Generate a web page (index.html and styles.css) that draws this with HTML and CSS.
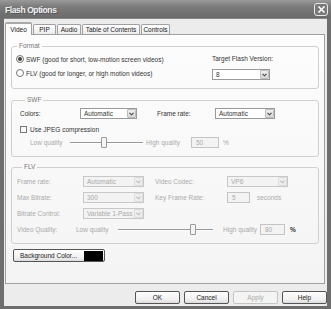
FILE: index.html
```html
<!DOCTYPE html>
<html lang="en">
<head>
  <meta charset="UTF-8" />
  <title>Flash Options</title>
  <link rel="stylesheet" href="styles.css">
</head>
<body>
  <div class="window">
    <div class="titlebar">
      <span class="title">Flash Options</span>
      <span class="close">
        <svg width="9" height="9" viewBox="0 0 9 9"><path d="M1.5 1.5 L7.5 7.5 M7.5 1.5 L1.5 7.5" stroke="#fff" stroke-width="1.6" fill="none"/></svg>
      </span>
    </div>

    <div class="client">
      <div class="tabs">
        <span class="tab active t-video">Video</span>
        <span class="tab t-pip">PIP</span>
        <span class="tab t-audio">Audio</span>
        <span class="tab t-toc">Table of Contents</span>
        <span class="tab t-controls">Controls</span>
      </div>

      <div class="panel">
        <!-- format -->
        <fieldset class="group g-format">
          <legend>Format</legend>
          <div class="format-body">
            <div class="radios">
              <div class="radio-row"><span class="radio on"></span>SWF (good for short, low-motion screen videos)</div>
              <div class="radio-row"><span class="radio"></span>FLV (good for longer, or high motion videos)</div>
            </div>
            <div class="target">
              <span class="row-text">Target Flash Version:</span>
              <div class="combo w-target"><span>8</span><i class="drop"><svg width="5" height="4" viewBox="0 0 5 4"><path d="M0.5 0.8 L2.5 2.8 L4.5 0.8" stroke="#444" stroke-width="1.1" fill="none"/></svg></i></div>
            </div>
          </div>
        </fieldset>

        <!-- swf -->
        <fieldset class="group g-swf">
          <legend>SWF</legend>
          <div class="row">
            <span class="lbl w-colors">Colors:</span>
            <div class="combo w-c1"><span>Automatic</span><i class="drop"><svg width="5" height="4" viewBox="0 0 5 4"><path d="M0.5 0.8 L2.5 2.8 L4.5 0.8" stroke="#444" stroke-width="1.1" fill="none"/></svg></i></div>
            <span class="lbl w-frame">Frame rate:</span>
            <div class="combo w-c2"><span>Automatic</span><i class="drop"><svg width="5" height="4" viewBox="0 0 5 4"><path d="M0.5 0.8 L2.5 2.8 L4.5 0.8" stroke="#444" stroke-width="1.1" fill="none"/></svg></i></div>
          </div>
          <div class="row">
            <span class="check"></span>
            <span>Use JPEG compression</span>
          </div>
          <div class="row indent off">
            <span class="lbl w-low">Low quality</span>
            <div class="slider w-s1"><span class="track"></span><span class="thumb th-s1"></span></div>
            <span class="lbl w-high">High quality</span>
            <div class="field w-f1">50</div>
            <span class="pct">%</span>
          </div>
        </fieldset>

        <!-- flv -->
        <fieldset class="group g-flv off">
          <legend>FLV</legend>
          <div class="row">
            <span class="lbl w-flv">Frame rate:</span>
            <div class="combo dis w-c3"><span>Automatic</span><i class="drop"><svg width="5" height="4" viewBox="0 0 5 4"><path d="M0.5 0.8 L2.5 2.8 L4.5 0.8" stroke="#bbb" stroke-width="1.1" fill="none"/></svg></i></div>
            <span class="lbl w-flv2">Video Codec:</span>
            <div class="combo dis w-c3"><span>VP6</span><i class="drop"><svg width="5" height="4" viewBox="0 0 5 4"><path d="M0.5 0.8 L2.5 2.8 L4.5 0.8" stroke="#bbb" stroke-width="1.1" fill="none"/></svg></i></div>
          </div>
          <div class="row">
            <span class="lbl w-flv">Max Bitrate:</span>
            <div class="combo dis w-c3"><span>300</span><i class="drop"><svg width="5" height="4" viewBox="0 0 5 4"><path d="M0.5 0.8 L2.5 2.8 L4.5 0.8" stroke="#bbb" stroke-width="1.1" fill="none"/></svg></i></div>
            <span class="lbl w-flv2">Key Frame Rate:</span>
            <div class="field w-f2">5</div>
            <span class="secs">seconds</span>
          </div>
          <div class="row">
            <span class="lbl w-flv">Bitrate Control:</span>
            <div class="combo dis w-c3"><span>Variable 1-Pass</span><i class="drop"><svg width="5" height="4" viewBox="0 0 5 4"><path d="M0.5 0.8 L2.5 2.8 L4.5 0.8" stroke="#bbb" stroke-width="1.1" fill="none"/></svg></i></div>
          </div>
          <div class="row">
            <span class="lbl w-vq">Video Quality:</span>
            <span class="lbl w-low2">Low quality</span>
            <div class="slider w-s2"><span class="track"></span><span class="thumb th-s2"></span></div>
            <span class="lbl w-high2">High quality</span>
            <div class="field w-f3">80</div>
            <span class="pct dark">%</span>
          </div>
        </fieldset>

        <div class="btn bg-btn">Background Color... <span class="swatch"></span></div>
      </div>

      <div class="buttons">
        <div class="btn">OK</div>
        <div class="btn">Cancel</div>
        <div class="btn dis">Apply</div>
        <div class="btn">Help</div>
      </div>
    </div>
  </div>
</body>
</html>
```

FILE: styles.css
```css
* {
  box-sizing: border-box;
}

body {
  margin: 0;
  background: #fff;
}

.window {
  width: 331px;
  height: 309px;
  background: #6e6e6e;
  display: flex;
  flex-direction: column;
  font-family: "Liberation Sans", Arial, sans-serif;
  font-size: 6.5px;
  color: #333;
}

.titlebar {
  height: 18px;
  background: linear-gradient(#9a9a9a, #7c7c7c 35%, #727272 70%, #6a6a6a);
  display: flex;
  align-items: center;
  justify-content: space-between;
  padding: 1px 3px 0 5px;
}

.title {
  color: #f2f2f2;
  font-size: 8.5px;
  font-weight: bold;
  letter-spacing: -0.4px;
  text-shadow: 1px 1px 0 #555;
}

.close {
  width: 14px;
  height: 13px;
  border: 1px solid #e8e8e8;
  border-radius: 3px;
  background: #7a7a7a;
  display: flex;
  align-items: center;
  justify-content: center;
}

.client {
  flex: 1;
  margin: 0 4px 3px 4px;
  background: #ececec;
  display: flex;
  flex-direction: column;
  border-top: 1px solid #888;
}

/* tabs */
.tabs {
  display: flex;
  align-items: flex-end;
  height: 15px;
  padding-left: 1px;
  position: relative;
  z-index: 1;
}

.tab {
  height: 10px;
  border: 1px solid #a0a0a0;
  border-bottom: none;
  border-radius: 2px 2px 0 0;
  background: linear-gradient(#fff, #ececec);
  display: flex;
  align-items: center;
  justify-content: center;
  color: #222;
  margin-right: 1px;
}

.tab.active {
  height: 13px;
  margin-bottom: -1px;
  background: #fcfcfc;
  border-top: 2px solid #a8a8a8;
  padding-bottom: 1px;
}

.t-video { width: 27px; }
.t-pip { width: 23px; }
.t-audio { width: 24px; }
.t-toc { width: 58px; }
.t-controls { width: 29px; }

.panel {
  width: 320px;
  height: 250px;
  margin-left: 1px;
  border: 1px solid #a0a0a0;
  background: linear-gradient(#fdfdfd, #f4f4f4);
  padding: 7px 5px 0 5px;
  display: flex;
  flex-direction: column;
}

/* group boxes */
.group {
  margin: 0;
  border: 1px solid #d0d0d0;
  border-radius: 3px;
  padding: 4px 0 8px 0;
  min-width: 0;
}

.group legend {
  margin-left: 5px;
  padding: 0 2px;
  line-height: 8px;
  color: #777;
}

.g-swf {
  margin-top: 7px;
  padding-left: 8px;
}

.g-flv {
  margin-top: 6px;
  padding: 5px 0 8px 5px;
}

.format-body {
  display: flex;
}

.radios {
  width: 200px;
  padding-left: 4px;
  display: flex;
  flex-direction: column;
  gap: 4px;
}

.radio-row {
  height: 10px;
  display: flex;
  align-items: center;
  gap: 2px;
}

.radio {
  width: 8px;
  height: 8px;
  border: 1px solid #777;
  border-radius: 50%;
  background: #fafafa;
  display: flex;
  align-items: center;
  justify-content: center;
}

.radio.on::after {
  content: "";
  width: 4px;
  height: 4px;
  border-radius: 50%;
  background: #444;
}

.target {
  display: flex;
  flex-direction: column;
  gap: 5px;
}

.row-text {
  height: 10px;
  line-height: 10px;
}

.row {
  height: 11px;
  display: flex;
  align-items: center;
}

.g-swf .row + .row {
  margin-top: 5px;
}

.g-swf .row.indent {
  margin-top: 2px;
  padding-left: 10px;
}

.g-flv .row + .row {
  margin-top: 5px;
}

.lbl {
  flex: none;
}

.w-colors { width: 60px; }
.w-frame { width: 58px; margin-left: 20px; }
.w-low { width: 40px; }
.w-high { width: 45px; margin-left: 3px; }
.w-flv { width: 66px; }
.w-flv2 { width: 72px; margin-left: 11px; }
.w-vq { width: 59px; }
.w-low2 { width: 42px; }
.w-high2 { width: 37px; margin-left: 10px; }

.off {
  color: #aaa;
}

/* combo boxes */
.combo {
  height: 11px;
  border: 1px solid #9a9a9a;
  background: #fff;
  display: flex;
  align-items: center;
  justify-content: space-between;
  padding-left: 3px;
  flex: none;
  color: #333;
}

.combo .drop {
  width: 9px;
  height: 9px;
  background: linear-gradient(#f0f0f0, #d6d6d6);
  border: 1px solid #bdbdbd;
  border-radius: 1px;
  display: flex;
  align-items: center;
  justify-content: center;
}

.combo.dis {
  border-color: #c8c8c8;
  background: #f3f3f3;
  color: #aaa;
}

.combo.dis .drop {
  background: #eee;
  border-color: #dcdcdc;
}

.w-target { width: 58px; }
.w-c1 { width: 57px; }
.w-c2 { width: 60px; }
.w-c3 { width: 61px; }

/* text fields */
.field {
  height: 11px;
  border: 1px solid #c4c4c4;
  background: #f3f3f3;
  padding-left: 4px;
  line-height: 9px;
  color: #aaa;
  flex: none;
}

.w-f1 { width: 28px; }
.w-f2 { width: 23px; }
.w-f3 { width: 25px; }

.pct {
  margin-left: 4px;
}

.pct.dark {
  color: #333;
  font-weight: bold;
  margin-left: 5px;
}

.secs {
  margin-left: 7px;
}

.check {
  width: 7px;
  height: 7px;
  border: 1px solid #777;
  background: #fafafa;
  margin-right: 3px;
}

/* sliders */
.slider {
  position: relative;
  height: 11px;
  flex: none;
}

.w-s1 { width: 73px; }
.w-s2 { width: 95px; }

.track {
  position: absolute;
  left: 0;
  right: 0;
  top: 5px;
  height: 2px;
  border-top: 1px solid #999;
  border-bottom: 1px solid #fff;
}

.thumb {
  position: absolute;
  top: 0;
  width: 6px;
  height: 11px;
  border: 1px solid #999;
  border-radius: 1px;
  background: #f4f4f4;
}

.th-s1 { left: 31px; }
.th-s2 { left: 72px; }

/* buttons */
.btn {
  height: 13px;
  width: 45px;
  border: 1px solid #555;
  border-radius: 2px;
  background: linear-gradient(#fff, #f0f0f0 70%, #dcdcdc);
  display: flex;
  align-items: center;
  justify-content: center;
  color: #222;
}

.btn.dis {
  border-color: #c4c4c4;
  background: #f4f4f4;
  color: #aaa;
}

.bg-btn {
  width: 92px;
  margin: 5px 0 0 2px;
  justify-content: flex-start;
  padding-left: 6px;
  gap: 5px;
}

.swatch {
  width: 19px;
  height: 10px;
  margin-left: auto;
  margin-right: 1px;
  background: #000;
}

.buttons {
  display: flex;
  gap: 4px;
  padding-left: 131px;
  margin-top: 7px;
}
```
